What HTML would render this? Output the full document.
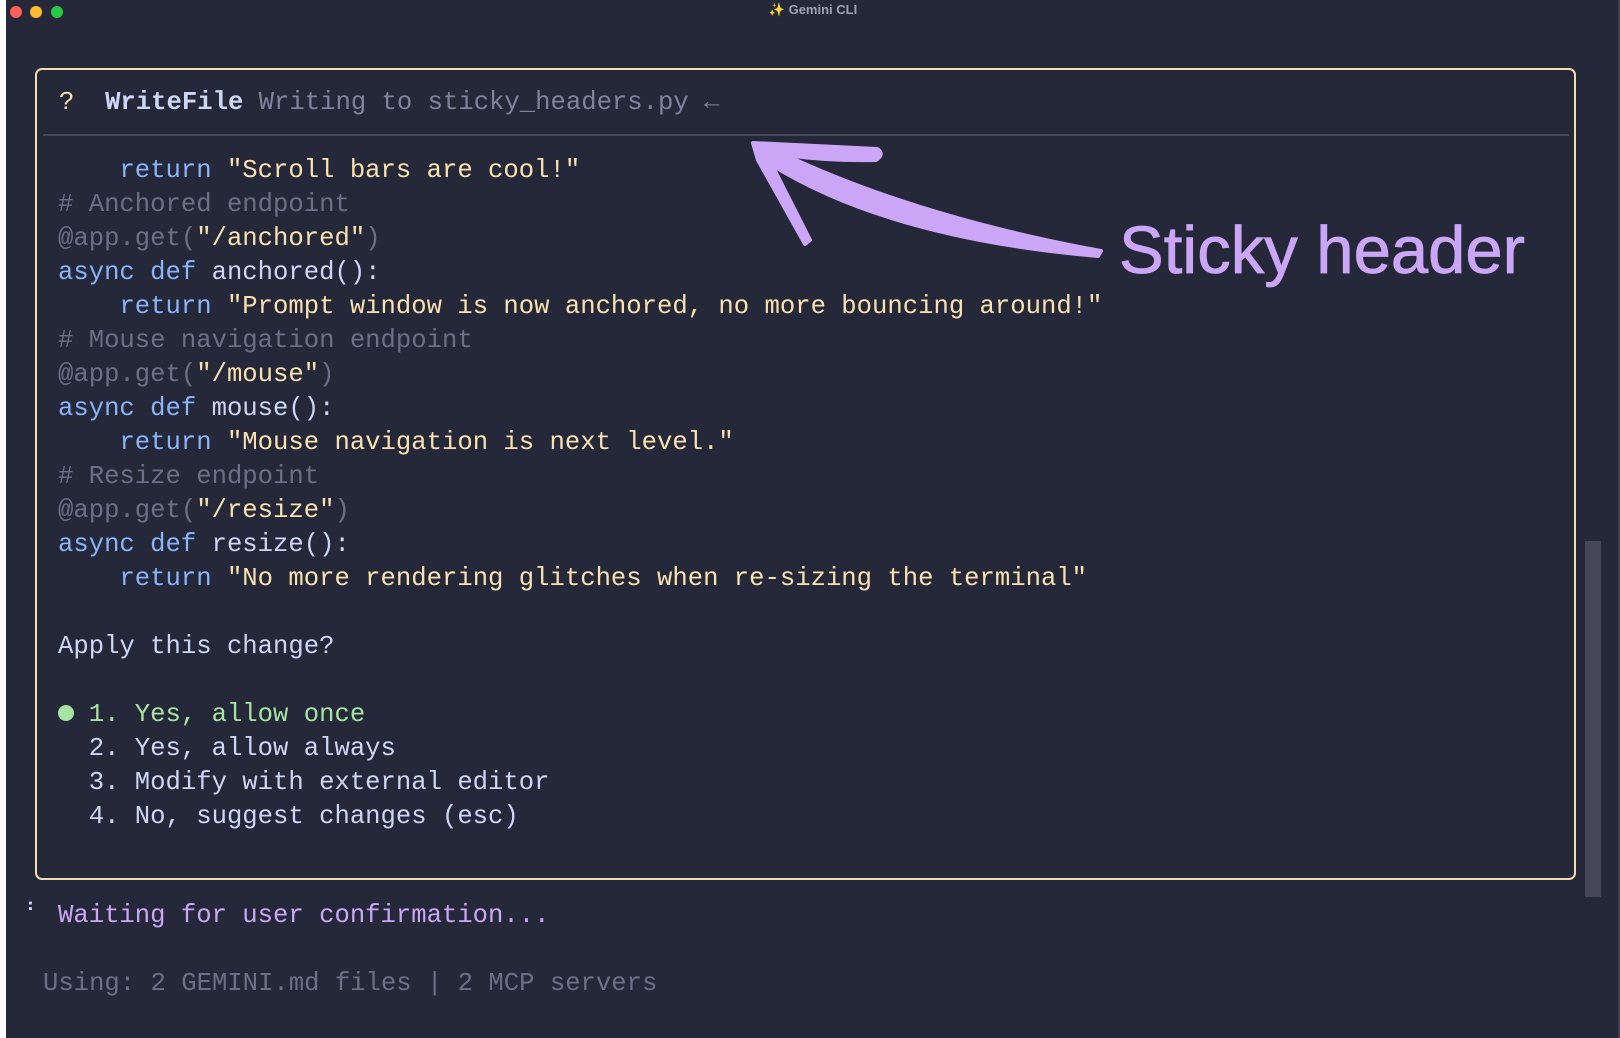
<!DOCTYPE html>
<html><head><meta charset="utf-8"><style>
html,body{margin:0;padding:0;width:1620px;height:1038px;overflow:hidden;background:#fff;}
#win{position:absolute;left:6px;top:0;width:1614px;height:1038px;background:#252839;}
.dot{position:absolute;top:6px;width:12px;height:12px;border-radius:50%;}
.l{position:absolute;left:0;height:34px;line-height:34px;font-family:"Liberation Mono",monospace;font-size:25.6px;color:#cdd6f4;white-space:pre;}
.k{color:#89b4fa}.s{color:#f9e2af}.c{color:#6c7086}.g{color:#a6e3a1}.p{color:#cba6f7}
</style></head><body>
<div id="win">
<div class="dot" style="left:4px;background:#fe5f57"></div>
<div class="dot" style="left:24px;background:#febc2e"></div>
<div class="dot" style="left:45px;background:#28c840"></div>
<div style="position:absolute;left:0;width:1614px;top:2px;text-align:center;font:bold 13px 'Liberation Sans',sans-serif;color:#a0a3b4;">✨ Gemini CLI</div>
<div style="position:absolute;left:1579px;top:541px;width:16px;height:356px;background:#454759"></div>
<div style="position:absolute;left:1612px;top:0;width:2px;height:1038px;background:#3a3d4e"></div>
</div>
<div style="position:absolute;left:35px;top:68px;width:1537px;height:808px;border:2px solid #f5dcae;border-radius:7px;"></div>
<div style="position:absolute;left:43px;top:134px;width:1526px;height:2px;background:#45475a"></div>

<div class="l" style="left:59px;top:86px"><span class="s">?</span>  <b style="color:#cdd6f4">WriteFile</b> <span style="color:#7f849c">Writing to sticky_headers.py ←</span></div>

<div class="l" style="left:58px;top:154px">    <span class="k">return</span> <span class="s">"Scroll bars are cool!"</span></div>
<div class="l c" style="left:58px;top:188px"># Anchored endpoint</div>
<div class="l" style="left:58px;top:222px"><span class="c">@app.get(</span><span class="s">"/anchored"</span><span class="c">)</span></div>
<div class="l" style="left:58px;top:256px"><span class="k">async def</span> anchored():</div>
<div class="l" style="left:58px;top:290px">    <span class="k">return</span> <span class="s">"Prompt window is now anchored, no more bouncing around!"</span></div>
<div class="l c" style="left:58px;top:324px"># Mouse navigation endpoint</div>
<div class="l" style="left:58px;top:358px"><span class="c">@app.get(</span><span class="s">"/mouse"</span><span class="c">)</span></div>
<div class="l" style="left:58px;top:392px"><span class="k">async def</span> mouse():</div>
<div class="l" style="left:58px;top:426px">    <span class="k">return</span> <span class="s">"Mouse navigation is next level."</span></div>
<div class="l c" style="left:58px;top:460px"># Resize endpoint</div>
<div class="l" style="left:58px;top:494px"><span class="c">@app.get(</span><span class="s">"/resize"</span><span class="c">)</span></div>
<div class="l" style="left:58px;top:528px"><span class="k">async def</span> resize():</div>
<div class="l" style="left:58px;top:562px">    <span class="k">return</span> <span class="s">"No more rendering glitches when re-sizing the terminal"</span></div>

<div class="l" style="left:58px;top:630px">Apply this change?</div>
<div style="position:absolute;left:58px;top:705px;width:16px;height:16px;border-radius:50%;background:#a6e3a1"></div>
<div class="l g" style="left:58px;top:698px">  1. Yes, allow once</div>
<div class="l" style="left:58px;top:732px">  2. Yes, allow always</div>
<div class="l" style="left:58px;top:766px">  3. Modify with external editor</div>
<div class="l" style="left:58px;top:800px">  4. No, suggest changes (esc)</div>

<div class="l" style="left:26px;top:896px;font-size:20px;color:#cdd6f4">⠃</div>
<div class="l p" style="left:58px;top:899px">Waiting for user confirmation...</div>
<div class="l" style="left:43px;top:967px;color:#6c7086">Using: 2 GEMINI.md files | 2 MCP servers</div>

<svg style="position:absolute;left:0;top:0" width="1620" height="1038">
<g fill="#cba6f7" stroke="#cba6f7" stroke-linecap="round" stroke-linejoin="round">
<path d="M753 143 L877 149 Q885 154 876 160 Q830 161 785 155 Q920 218 1101 251 L1098 256 Q890 238 772 165 L810 240 L805 244 L758 160 Z" stroke-width="4"/>
</g>
<text x="1119" y="273" font-family="Liberation Sans, sans-serif" font-size="67" fill="#cba6f7" stroke="#cba6f7" stroke-width="0.8">Sticky header</text>
</svg>
</body></html>
